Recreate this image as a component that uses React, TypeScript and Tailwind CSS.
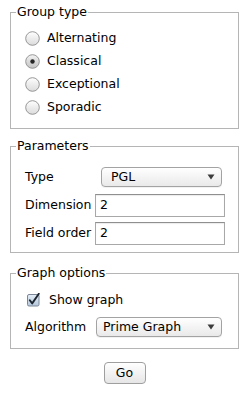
import React from 'react';

const Radio: React.FC<{ checked?: boolean }> = ({ checked }) => (
  <svg width="15" height="15" viewBox="0 0 15 15" className="shrink-0">
    <defs>
      <linearGradient id={checked ? 'rg-on' : 'rg-off'} x1="0" y1="0" x2="0" y2="1">
        <stop offset="0" stopColor={checked ? '#f4f4f4' : '#ffffff'} />
        <stop offset="0.5" stopColor={checked ? '#dadada' : '#ececec'} />
        <stop offset="1" stopColor={checked ? '#c4c4c4' : '#dcdcdc'} />
      </linearGradient>
    </defs>
    <circle cx="7.5" cy="7.5" r="6.8" fill={`url(#${checked ? 'rg-on' : 'rg-off'})`} stroke="#8c8c8c" strokeWidth="0.9" />
    {checked && <circle cx="7.5" cy="7.5" r="2.2" fill="#262626" />}
  </svg>
);

const Checkbox: React.FC = () => (
  <svg width="13" height="14" viewBox="0 0 13 14" className="shrink-0">
    <defs>
      <linearGradient id="cb" x1="0" y1="0" x2="0" y2="1">
        <stop offset="0" stopColor="#e6eef8" />
        <stop offset="1" stopColor="#b4c6dc" />
      </linearGradient>
    </defs>
    <rect x="0.5" y="1.5" width="11.5" height="11.5" rx="1.5" fill="url(#cb)" stroke="#7b8796" />
    <path d="M2.8 7.2 L5.2 10.4 L11.8 0.8" fill="none" stroke="#1d2630" strokeWidth="1.9" strokeLinecap="round" strokeLinejoin="round" />
  </svg>
);

const Popup: React.FC<{ label: string; className: string }> = ({ label, className }) => (
  <div
    className={`flex h-[20px] items-center justify-between rounded-[4px] border border-[#a3a3a3] bg-gradient-to-b from-white to-[#e9e9e9] shadow-[0_1px_0_rgba(0,0,0,0.05)] ${className}`}
  >
    <span className="leading-none">{label}</span>
    <svg width="8" height="6" viewBox="0 0 8 6" className="mr-[6px]">
      <path d="M0.5 0.5 L7.5 0.5 L4 5.5 Z" fill="#3c3c3c" />
    </svg>
  </div>
);

const TextBox: React.FC<{ value: string }> = ({ value }) => (
  <div className="flex h-[23px] w-[130px] items-center border border-[#a8a8a8] border-t-[#8f8f8f] bg-white pl-[4px] shadow-[inset_0_1px_1px_rgba(0,0,0,0.08)]">
    {value}
  </div>
);

export default function App() {
  const groups = [
    { name: 'Alternating', checked: false },
    { name: 'Classical', checked: true },
    { name: 'Exceptional', checked: false },
    { name: 'Sporadic', checked: false },
  ];

  return (
    <div className="h-[401px] w-[249px] bg-white px-[10px] pt-[4px] text-[12.5px] text-black [font-family:'DejaVu_Sans',sans-serif]">
      <fieldset className="border border-[#b5b5b5] pb-[9px] pl-[14px] pt-[7px]">
        <legend className="-ml-[9px] px-[1px] leading-[16px]">Group type</legend>
        {groups.map((g) => (
          <div key={g.name} className="flex h-[23px] items-center gap-[7px]">
            <Radio checked={g.checked} />
            <span>{g.name}</span>
          </div>
        ))}
      </fieldset>

      <fieldset className="mt-[9px] border border-[#b5b5b5] pb-[5px] pl-[14px] pt-[9px]">
        <legend className="-ml-[9px] px-[1px] leading-[16px]">Parameters</legend>
        <div className="flex h-[28px] items-center">
          <span className="w-[70px]">Type</span>
          <Popup label="PGL" className="ml-[6px] w-[121px] pl-[9px]" />
        </div>
        <div className="flex h-[28px] items-center">
          <span className="w-[70px]">Dimension</span>
          <TextBox value="2" />
        </div>
        <div className="flex h-[28px] items-center">
          <span className="w-[70px]">Field order</span>
          <TextBox value="2" />
        </div>
      </fieldset>

      <fieldset className="mt-[12px] border border-[#b5b5b5] pb-[9px] pl-[14px] pt-[8px]">
        <legend className="-ml-[9px] px-[1px] leading-[16px]">Graph options</legend>
        <div className="flex h-[22px] items-center gap-[9px] pl-[2px]">
          <Checkbox />
          <span>Show graph</span>
        </div>
        <div className="mt-[4px] flex h-[24px] items-center">
          <span className="w-[71px]">Algorithm</span>
          <Popup label="Prime Graph" className="w-[126px] pl-[6px]" />
        </div>
      </fieldset>

      <div className="mt-[13px] flex justify-center">
        <button className="flex h-[22px] w-[42px] items-center justify-center rounded-[4px] border border-[#9f9f9f] bg-gradient-to-b from-white to-[#e6e6e6] leading-none">
          Go
        </button>
      </div>
    </div>
  );
}
